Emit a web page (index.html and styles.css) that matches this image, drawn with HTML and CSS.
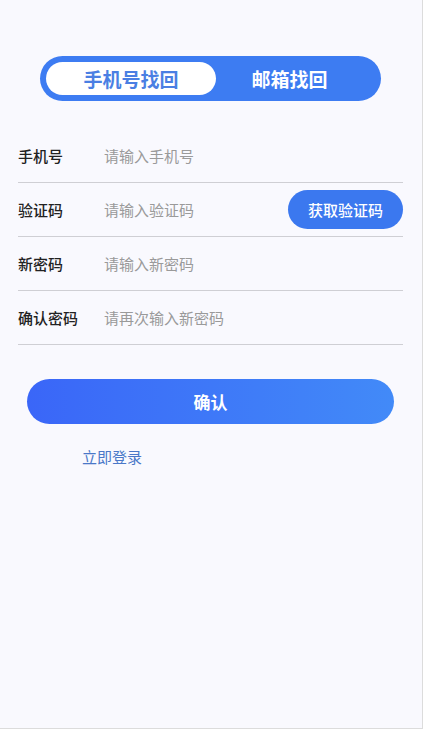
FILE: index.html
```html
<!DOCTYPE html>
<html lang='zh-CN'>
<head>
    <meta charset='UTF-8'>
    <meta name='viewport' content='width=device-width, initial-scale=1.0'>
    <title>找回密码</title>
    <link rel="stylesheet" href="styles.css">
</head>
<body>
    <div class="page">
        <div class="tabs">
            <button class="tab active">手机号找回</button>
            <button class="tab">邮箱找回</button>
        </div>

        <div class="form">
            <div class="row">
                <span class="label">手机号</span>
                <input class="field" type="text" placeholder="请输入手机号">
            </div>
            <div class="row">
                <span class="label">验证码</span>
                <input class="field" type="text" placeholder="请输入验证码">
                <button class="code_button">获取验证码</button>
            </div>
            <div class="row">
                <span class="label">新密码</span>
                <input class="field" type="password" placeholder="请输入新密码">
            </div>
            <div class="row">
                <span class="label">确认密码</span>
                <input class="field" type="password" placeholder="请再次输入新密码">
            </div>
        </div>

        <button class="confirm_button">确认</button>
        <a class="login_link" href="#">立即登录</a>
    </div>
</body>
</html>
```

FILE: styles.css
```css
body
{
    margin: 0;
    background: #ffffff;
    font-family: 'Noto Sans CJK SC', 'Noto Sans', sans-serif;
}
button
{
    font-family: inherit;
    border: none;
    cursor: pointer;
}
.page
{
    box-sizing: border-box;
    width: 423px;
    height: 729px;
    padding-top: 56px;
    background: #f9f9fe;
    border-right: 1px solid #dcdcdc;
    border-bottom: 1px solid #dcdcdc;
    display: flex;
    flex-direction: column;
}
.tabs
{
    box-sizing: border-box;
    width: 341px;
    height: 45px;
    margin-left: 40px;
    padding: 6px;
    border-radius: 23px;
    background: #3d7cf2;
    display: flex;
}
.tab
{
    flex: 1;
    border-radius: 17px;
    background: transparent;
    color: #ffffff;
    font-size: 19px;
    font-weight: bold;
    padding: 0 12px 0 0;
}
.tab.active
{
    flex: 0 0 170px;
    padding: 0;
    background: #ffffff;
    color: #4a7fe3;
}
.form
{
    margin: 28px 19px 0 18px;
}
.row
{
    height: 53px;
    border-bottom: 1px solid #cfcfd4;
    display: flex;
    align-items: center;
}
.label
{
    width: 86px;
    font-size: 15px;
    font-weight: 500;
    color: #222222;
}
.field
{
    flex: 1;
    min-width: 0;
    border: none;
    outline: none;
    background: transparent;
    padding: 0;
    font-family: inherit;
    font-size: 15px;
    color: #333333;
}
.field::placeholder
{
    color: #9a9a9a;
}
.code_button
{
    width: 115px;
    height: 39px;
    border-radius: 20px;
    background: #3b78ef;
    color: #ffffff;
    font-size: 15px;
    font-weight: 500;
    padding: 0;
}
.confirm_button
{
    width: 367px;
    height: 45px;
    margin: 34px 0 0 27px;
    border-radius: 23px;
    background: linear-gradient(90deg, #3a66f8, #428af8);
    color: #ffffff;
    font-size: 17px;
    font-weight: bold;
}
.login_link
{
    margin: 22px 0 0 82px;
    align-self: flex-start;
    font-size: 15px;
    color: #4a78c8;
    text-decoration: none;
}
```
